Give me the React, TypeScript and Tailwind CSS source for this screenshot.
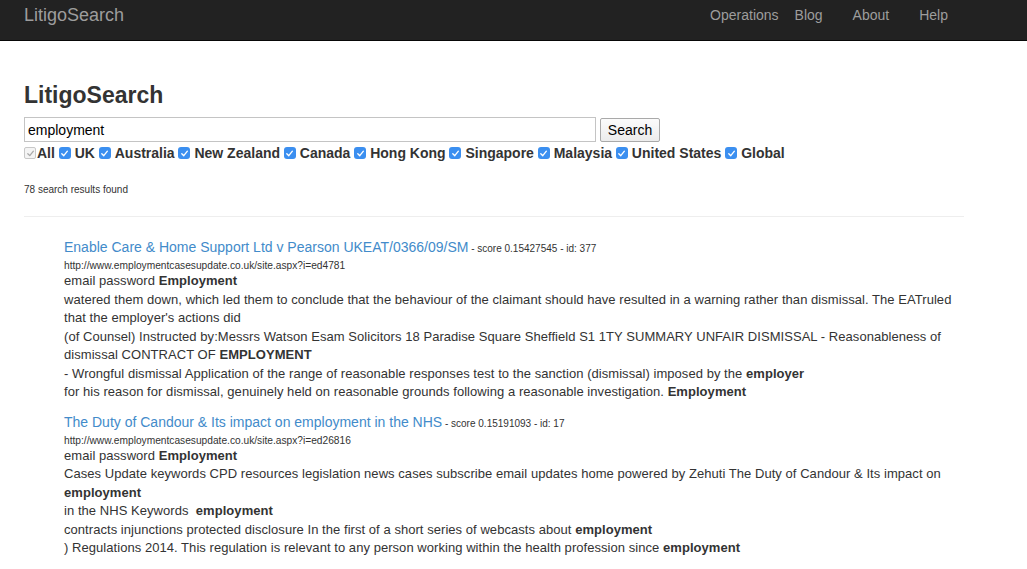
import React from "react";

const Check = ({ disabled = false }: { disabled?: boolean }) =>
  disabled ? (
    <span className="inline-flex h-[12px] w-[12px] items-center justify-center rounded-[2px] border border-[#c8c8c8] bg-[#f4f4f4]">
      <svg width="9" height="9" viewBox="0 0 10 10">
        <path d="M2 5.2 L4.2 7.4 L8.2 2.4" fill="none" stroke="#a8a8a8" strokeWidth="1.4" strokeLinecap="round" strokeLinejoin="round" />
      </svg>
    </span>
  ) : (
    <span className="inline-flex h-[12px] w-[12px] items-center justify-center rounded-[3px] bg-[#3b8ff0]">
      <svg width="9" height="9" viewBox="0 0 10 10">
        <path d="M2 5.2 L4.2 7.4 L8.2 2.4" fill="none" stroke="#ffffff" strokeWidth="1.5" strokeLinecap="round" strokeLinejoin="round" />
      </svg>
    </span>
  );

const regions = ["UK", "Australia", "New Zealand", "Canada", "Hong Kong", "Singapore", "Malaysia", "United States", "Global"];

const narrow = "tracking-[0.05px]";

export default function App() {
  return (
    <div className="min-h-[569px] bg-white font-['Liberation_Sans',Arial,Helvetica,sans-serif] text-[#333]">
      <nav className="flex h-[41px] items-start border-b border-[#080808] bg-[#222]">
        <div className="ml-[24px] mt-[4px] text-[18px] leading-[22px] text-[#9d9d9d]">LitigoSearch</div>
        <div className="ml-auto mt-[5px] flex text-[14px] leading-[20px] text-[#9d9d9d]">
          <span className="mr-[16px]">Operations</span>
          <span className="mr-[30px]">Blog</span>
          <span className="mr-[30px]">About</span>
          <span className="mr-[79px]">Help</span>
        </div>
      </nav>

      <div className="ml-[24px] w-[940px]">
        <h3 className="mt-[41px] text-[23px] font-bold leading-[26px]">LitigoSearch</h3>
        <div className="mt-[9px] flex items-center">
          <div className="flex h-[25px] w-[572px] items-center border border-[#c4c4c4] bg-white pl-[3px] pt-[1px] text-[14px] text-black">
            employment
          </div>
          <button className="ml-[4px] h-[24px] w-[60px] rounded-[2px] border border-[#a9a9a9] bg-gradient-to-b from-[#fbfbfb] to-[#ececec] text-[14px] leading-[20px] text-black">
            Search
          </button>
        </div>
        <div className="mt-[1px] flex h-[20px] items-center text-[14px] font-bold">
          <Check disabled />
          <span className="ml-[1px] mr-[3.8px]">All</span>
          {regions.map((r) => (
            <React.Fragment key={r}>
              <Check />
              <span className="ml-[4px] mr-[3.8px]">{r}</span>
            </React.Fragment>
          ))}
        </div>
        <div className="mt-[20px] text-[10px] leading-[14px]">78 search results found</div>
        <hr className="mt-[19px] border-t border-[#eee]" />

        <ul className="mt-[20px] pl-[40px] text-[13px] leading-[18.5px] tracking-[0.05px]">
          <li>
            <div className="leading-[20px] tracking-normal">
              <span className="text-[14px] text-[#428bca]">Enable Care &amp; Home Support Ltd v Pearson UKEAT/0366/09/SM</span>
              <span className="text-[10px]"> - score 0.15427545 - id: 377</span>
            </div>
            <div className="text-[10.2px] leading-[13px] tracking-normal">http://www.employmentcasesupdate.co.uk/site.aspx?i=ed4781</div>
            <div>
              email password <b>Employment</b>
            </div>
            <div>
              watered them down, which led them to conclude that the behaviour of the claimant should have resulted in a warning rather than dismissal. The EATruled that the employer's actions did
            </div>
            <div>
              (of Counsel) Instructed by:Messrs Watson Esam Solicitors 18 Paradise Square Sheffield S1 1TY SUMMARY UNFAIR DISMISSAL - Reasonableness of dismissal CONTRACT OF <b>EMPLOYMENT</b>
            </div>
            <div className={narrow}>
              - Wrongful dismissal Application of the range of reasonable responses test to the sanction (dismissal) imposed by the <b>employer</b>
            </div>
            <div className={narrow}>
              for his reason for dismissal, genuinely held on reasonable grounds following a reasonable investigation. <b>Employment</b>
            </div>
          </li>
          <li className="mt-[10px]">
            <div className="leading-[20px] tracking-normal">
              <span className="text-[14px] text-[#428bca]">The Duty of Candour &amp; Its impact on employment in the NHS</span>
              <span className="text-[10px]"> - score 0.15191093 - id: 17</span>
            </div>
            <div className="text-[10.2px] leading-[13px] tracking-normal">http://www.employmentcasesupdate.co.uk/site.aspx?i=ed26816</div>
            <div>
              email password <b>Employment</b>
            </div>
            <div>
              Cases Update keywords CPD resources legislation news cases subscribe email updates home powered by Zehuti The Duty of Candour &amp; Its impact on <b>employment</b>
            </div>
            <div className={narrow}>
              in the NHS Keywords&nbsp; <b>employment</b>
            </div>
            <div className={narrow}>
              contracts injunctions protected disclosure In the first of a short series of webcasts about <b>employment</b>
            </div>
            <div className={narrow}>
              ) Regulations 2014. This regulation is relevant to any person working within the health profession since <b>employment</b>
            </div>
          </li>
        </ul>
      </div>
    </div>
  );
}
